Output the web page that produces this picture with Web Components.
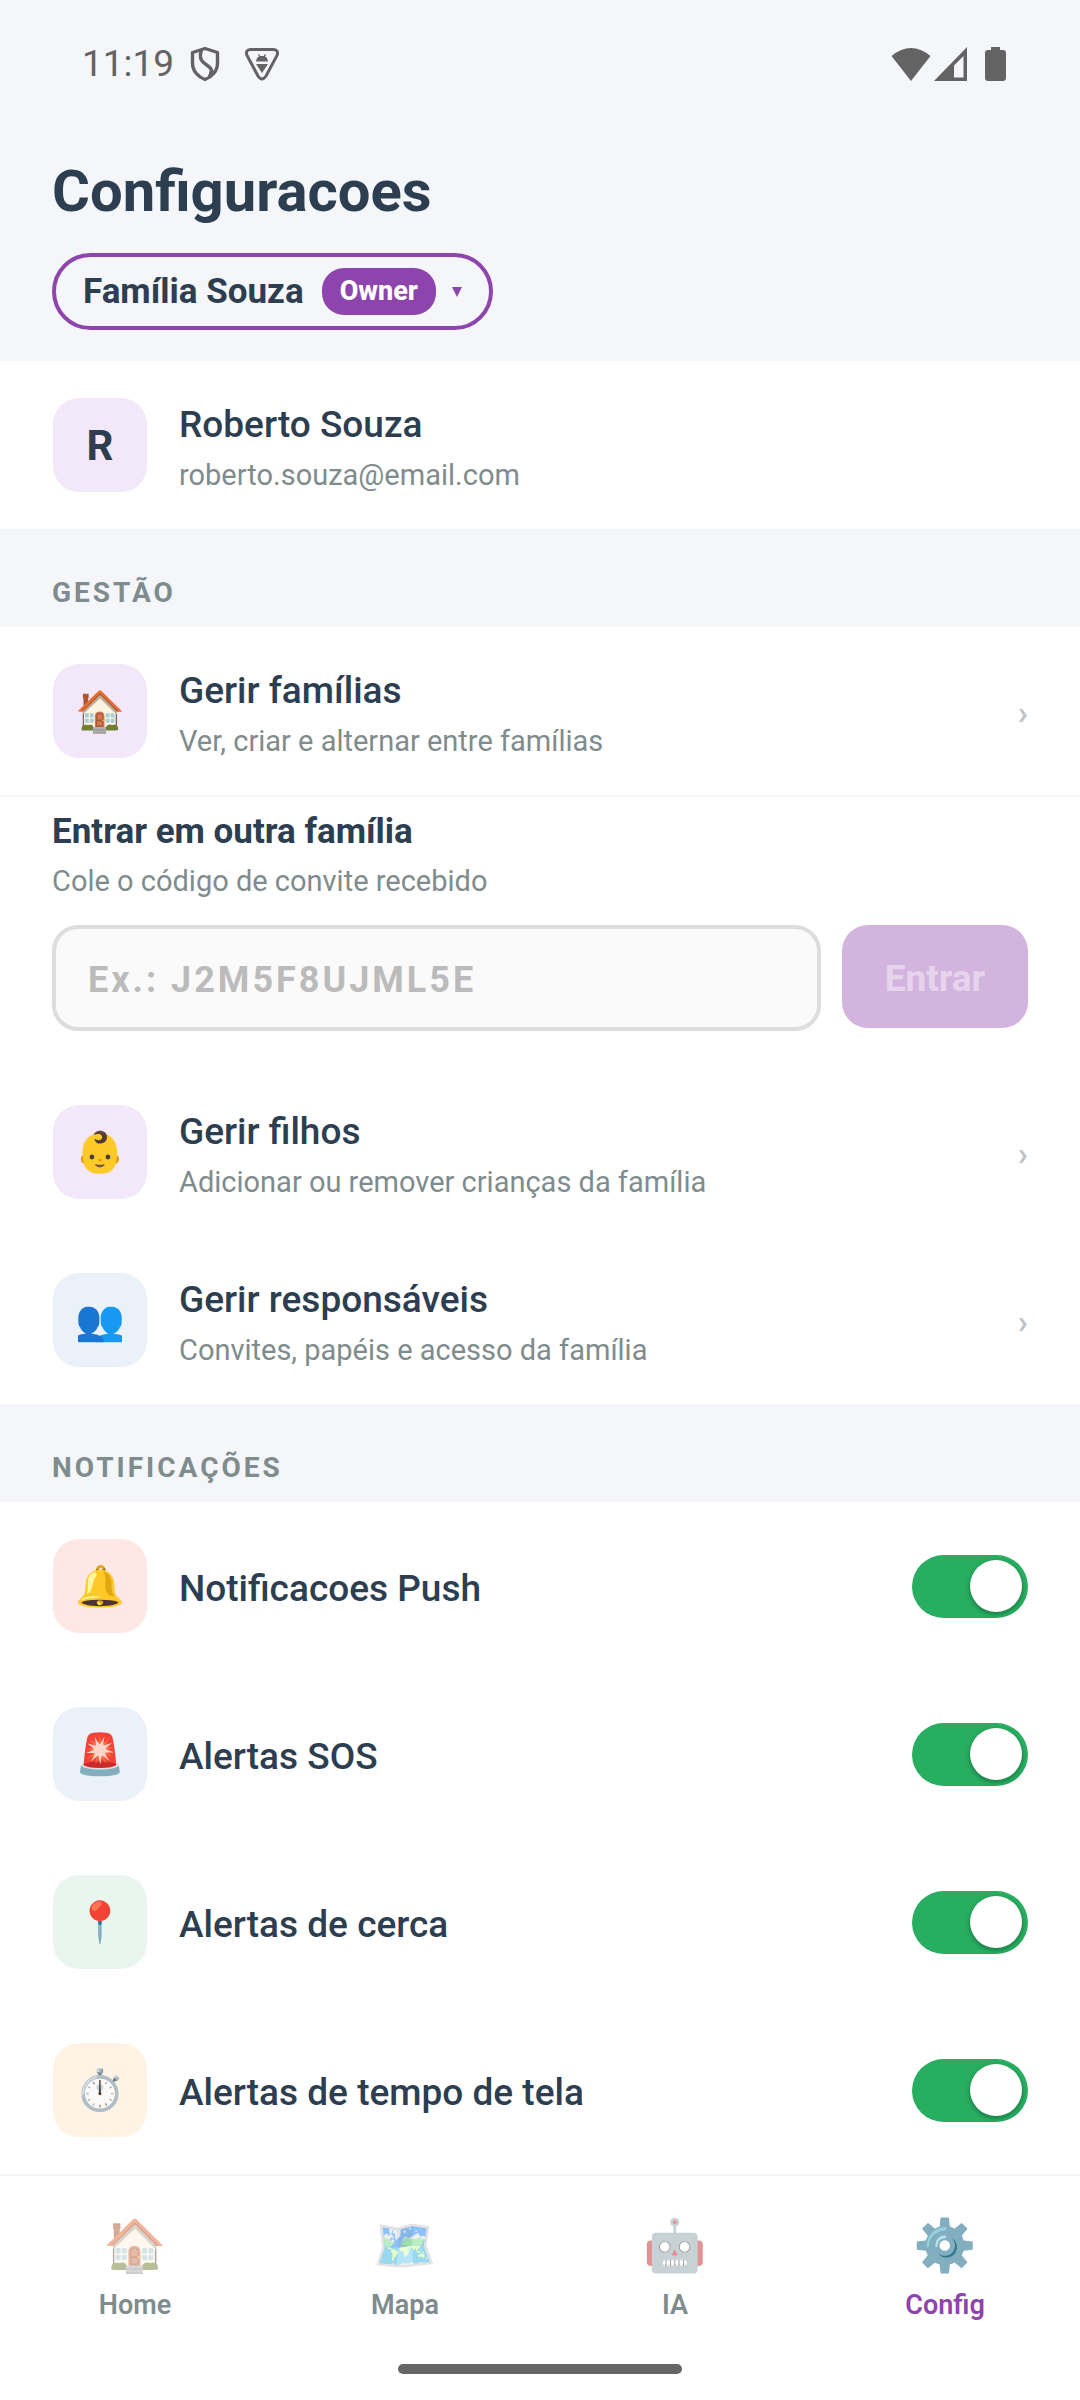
<!DOCTYPE html>
<html lang="pt-BR">
<head>
<meta charset="utf-8">
<meta name="viewport" content="width=device-width, initial-scale=1">
<title>Configuracoes</title>
<style>
    :root {
        --ink: #2c3e50;
        --muted: #7f8c8d;
        --accent: #8e44ad;
        --page: #f4f6fa;
        --side: 52px;
    }
    body {
        margin: 0;
        min-height: 100vh;
        display: flex;
        flex-direction: column;
        background: var(--page);
        color: var(--ink);
        font-family: Roboto, "Noto Color Emoji", sans-serif;
    }
    main {
        display: flex;
        flex-direction: column;
    }
</style>
</head>
<body>
    <status-bar time="11:19"></status-bar>
    <main>
        <page-header>
            Configuracoes
            <family-picker slot="picker" role-name="Owner">Família Souza</family-picker>
        </page-header>
        <settings-row tint="#f3e8f9">
            <b slot="icon">R</b>
            Roberto Souza
            <span slot="detail">roberto.souza@email.com</span>
        </settings-row>

        <section-title>GESTÃO</section-title>
        <settings-row tint="#f3e8f9" href="#familias" divided>
            <span slot="icon">🏠</span>
            Gerir famílias
            <span slot="detail">Ver, criar e alternar entre famílias</span>
        </settings-row>
        <join-family></join-family>
        <settings-row tint="#f3e8f9" href="#filhos">
            <span slot="icon">👶</span>
            Gerir filhos
            <span slot="detail">Adicionar ou remover crianças da família</span>
        </settings-row>
        <settings-row tint="#eaf1f8" href="#responsaveis">
            <span slot="icon">👥</span>
            Gerir responsáveis
            <span slot="detail">Convites, papéis e acesso da família</span>
        </settings-row>

        <section-title>NOTIFICAÇÕES</section-title>
        <settings-row tint="#fde8e6" toggle>
            <span slot="icon">🔔</span>
            Notificacoes Push
        </settings-row>
        <settings-row tint="#eaf1f8" toggle>
            <span slot="icon">🚨</span>
            Alertas SOS
        </settings-row>
        <settings-row tint="#e8f6ef" toggle>
            <span slot="icon">📍</span>
            Alertas de cerca
        </settings-row>
        <settings-row tint="#fef3e5" toggle>
            <span slot="icon">⏱️</span>
            Alertas de tempo de tela
        </settings-row>
    </main>
    <tab-bar>
        <tab-item href="#home" icon="🏠">Home</tab-item>
        <tab-item href="#mapa" icon="🗺️">Mapa</tab-item>
        <tab-item href="#ia" icon="🤖">IA</tab-item>
        <tab-item href="#config" icon="⚙️" active>Config</tab-item>
    </tab-bar>

<script>
class StatusBar extends HTMLElement {
    constructor() {
        super();
        this.attachShadow({ mode: 'open' });
        this.shadowRoot.innerHTML = `
            <style>
                :host {
                    display: flex;
                    align-items: center;
                    justify-content: space-between;
                    height: 128px;
                    padding: 0 74px 0 82px;
                    color: #636363;
                }
                div {
                    display: flex;
                    align-items: center;
                }
                .time {
                    font-size: 37px;
                    line-height: 44px;
                    margin-right: 15px;
                }
                svg {
                    display: block;
                }
                .shield {
                    margin-right: 23px;
                }
                .wifi {
                    margin-right: 3px;
                }
                .signal {
                    margin-right: 18px;
                }
            </style>
            <div>
                <span class="time">${this.getAttribute('time')}</span>
                <svg class="shield" width="32" height="36" viewBox="0 0 32 36" fill="none" stroke="currentColor" stroke-width="3.4" stroke-linejoin="round">
                    <path d="M16 2.500 L28.500 6.500 V17 C28.500 25 23 31 16 33.500 C9 31 3.500 25 3.500 17 V6.500 Z"/>
                    <path d="M12.500 4 C9.500 13 13 15.500 17 18.500 C23 22.500 24 24.500 20.500 30.500"/>
                    <path d="M22 23 L24.500 25 L19 32 Z" fill="currentColor" stroke-width="1"/>
                </svg>
                <svg width="36" height="36" viewBox="0 0 36 36" fill="currentColor">
                    <path d="M6.500 3.500 H29.500 Q35 4 33 9.500 L22 30 Q18 36 14 30 L3 9.500 Q1 4 6.500 3.500 Z" fill="none" stroke="currentColor" stroke-width="3"/>
                    <path d="M12 15.500 Q12.500 11.500 15 10.500 L14 8.500 L15 8 L16.200 10 H19.800 L21 8 L22 8.500 L21 10.500 Q23.500 11.500 24 15.500 Z"/>
                    <path d="M12 18 H24 L18 27 Z"/>
                </svg>
            </div>
            <div>
                <svg class="wifi" width="40" height="34" viewBox="0 0 40 34" fill="currentColor">
                    <path d="M20 34 L0.500 9 Q20 -7 39.500 9 Z"/>
                </svg>
                <svg class="signal" width="33" height="34" viewBox="0 0 33 34" fill="currentColor" fill-rule="evenodd">
                    <path d="M33 0 V34 H0 Z M29.500 9 L20 18.500 V30.500 H29.500 Z"/>
                </svg>
                <svg width="21" height="34" viewBox="0 0 21 34" fill="currentColor">
                    <path d="M6 0 H15 V3 H18 Q21 3 21 6 V31 Q21 34 18 34 H3 Q0 34 0 31 V6 Q0 3 3 3 H6 Z"/>
                </svg>
            </div>
        `;
    }
}

class PageHeader extends HTMLElement {
    constructor() {
        super();
        this.attachShadow({ mode: 'open' });
        this.shadowRoot.innerHTML = `
            <style>
                :host {
                    display: flex;
                    flex-direction: column;
                    align-items: flex-start;
                    gap: 26px;
                    padding: 27px var(--side) 31px;
                }
                h1 {
                    margin: 0;
                    font-size: 58px;
                    line-height: 72px;
                    font-weight: 700;
                }
            </style>
            <h1><slot></slot></h1>
            <slot name="picker"></slot>
        `;
    }
}

class FamilyPicker extends HTMLElement {
    constructor() {
        super();
        this.attachShadow({ mode: 'open' });
        this.shadowRoot.innerHTML = `
            <style>
                :host {
                    display: block;
                }
                button {
                    display: flex;
                    align-items: center;
                    height: 77px;
                    padding: 0 27px;
                    border: 4px solid var(--accent);
                    border-radius: 40px;
                    background: transparent;
                    color: inherit;
                    font: 700 35px/40px Roboto, sans-serif;
                    cursor: pointer;
                }
                .role {
                    margin: 0 16px 0 18px;
                    padding: 0 18px;
                    border-radius: 22px;
                    background: var(--accent);
                    color: white;
                    font-size: 27px;
                    line-height: 47px;
                    font-weight: 800;
                }
                svg {
                    display: block;
                    fill: var(--accent);
                }
            </style>
            <button type="button" aria-haspopup="listbox">
                <slot></slot>
                <span class="role">${this.getAttribute('role-name')}</span>
                <svg width="10" height="10" viewBox="0 0 10 10"><path d="M0 0 H10 L5 10 Z"/></svg>
            </button>
        `;
    }
}

class SectionTitle extends HTMLElement {
    constructor() {
        super();
        this.attachShadow({ mode: 'open' });
        this.shadowRoot.innerHTML = `
            <style>
                :host {
                    display: block;
                    padding: 46px var(--side) 16px;
                }
                h2 {
                    margin: 0;
                    color: var(--muted);
                    font-size: 28px;
                    line-height: 36px;
                    font-weight: 700;
                    letter-spacing: 3px;
                }
            </style>
            <h2><slot></slot></h2>
        `;
    }
}

class ToggleSwitch extends HTMLElement {
    constructor() {
        super();
        this.attachShadow({ mode: 'open' });
        this.shadowRoot.innerHTML = `
            <style>
                :host {
                    display: block;
                }
                input {
                    appearance: none;
                    display: flex;
                    align-items: center;
                    width: 116px;
                    height: 63px;
                    margin: 0;
                    padding: 0 6px;
                    box-sizing: border-box;
                    border-radius: 32px;
                    background: #c8cdd2;
                    cursor: pointer;
                }
                input::before {
                    content: "";
                    width: 52px;
                    height: 52px;
                    border-radius: 50%;
                    background: white;
                    box-shadow: 0 2px 5px rgba(0, 0, 0, 0.35);
                }
                input:checked {
                    justify-content: flex-end;
                    background: #27ae60;
                }
            </style>
            <input type="checkbox" role="switch" checked>
        `;
        this.shadowRoot.querySelector('input').setAttribute('aria-label', this.getAttribute('label'));
    }
}

class SettingsRow extends HTMLElement {
    constructor() {
        super();
        this.attachShadow({ mode: 'open' });
        const href = this.getAttribute('href');
        const title = [...this.childNodes]
            .filter((node) => node.nodeType === Node.TEXT_NODE)
            .map((node) => node.textContent.trim())
            .join('');
        let end = '';
        if (href) {
            end = '<span class="chevron" aria-hidden="true">›</span>';
        }
        if (this.hasAttribute('toggle')) {
            end = `<toggle-switch label="${title}"></toggle-switch>`;
        }
        const tag = href ? 'a' : 'div';
        this.shadowRoot.innerHTML = `
            <style>
                :host {
                    display: block;
                    background: white;
                }
                :host([divided]) {
                    border-bottom: 2px solid #f4f6fa;
                }
                .row {
                    display: flex;
                    align-items: center;
                    gap: 32px;
                    padding: 37px 52px 37px 53px;
                    color: inherit;
                    text-decoration: none;
                }
                .icon {
                    display: flex;
                    align-items: center;
                    justify-content: center;
                    flex: none;
                    width: 94px;
                    height: 94px;
                    padding-top: 2px;
                    box-sizing: border-box;
                    border-radius: 26px;
                    background: ${this.getAttribute('tint')};
                    font-size: 40px;
                    line-height: 50px;
                }
                ::slotted(b) {
                    font-size: 42px;
                }
                .text {
                    display: flex;
                    flex-direction: column;
                    gap: 13px;
                    flex: 1;
                    min-width: 0;
                    padding-top: 6px;
                }
                .title {
                    font-size: 37px;
                    line-height: 40px;
                    font-weight: 500;
                }
                ::slotted([slot="detail"]) {
                    color: var(--muted);
                    font-size: 29px;
                    line-height: 34px;
                }
                .chevron {
                    padding-top: 2px;
                    color: #bdc3c7;
                    font-size: 34px;
                    line-height: 40px;
                    font-weight: 600;
                }
            </style>
            <${tag} class="row" ${href ? `href="${href}"` : ''}>
                <span class="icon"><slot name="icon"></slot></span>
                <span class="text">
                    <span class="title"><slot></slot></span>
                    <slot name="detail"></slot>
                </span>
                ${end}
            </${tag}>
        `;
    }
}

class JoinFamily extends HTMLElement {
    constructor() {
        super();
        this.attachShadow({ mode: 'open' });
        this.shadowRoot.innerHTML = `
            <style>
                :host {
                    display: block;
                    padding: 12px var(--side) 37px;
                    background: white;
                }
                label {
                    display: block;
                    font-size: 35px;
                    line-height: 46px;
                    font-weight: 700;
                }
                p {
                    margin: 6px 0 24px;
                    color: var(--muted);
                    font-size: 29px;
                    line-height: 40px;
                }
                form {
                    display: flex;
                    align-items: flex-start;
                    gap: 21px;
                }
                input {
                    flex: 1;
                    min-width: 0;
                    height: 106px;
                    padding: 4px 32px 0;
                    box-sizing: border-box;
                    border: 4px solid #dddddd;
                    border-radius: 26px;
                    background: #fafafa;
                    color: inherit;
                    font: 700 36px/46px Roboto, sans-serif;
                    letter-spacing: 3px;
                }
                input::placeholder {
                    color: #bbbbbb;
                }
                button {
                    height: 103px;
                    padding: 4px 43px 0;
                    border: none;
                    border-radius: 26px;
                    background: #d2b4de;
                    color: #e6d4ed;
                    font: 700 37px/46px Roboto, sans-serif;
                }
            </style>
            <label for="code">Entrar em outra família</label>
            <p id="hint">Cole o código de convite recebido</p>
            <form>
                <input id="code" name="code" type="text" placeholder="Ex.: J2M5F8UJML5E" aria-describedby="hint" autocomplete="off">
                <button type="submit" disabled>Entrar</button>
            </form>
        `;
    }

    connectedCallback() {
        this.shadowRoot.querySelector('form').addEventListener('submit', (event) => {
            event.preventDefault();
        });
    }
}

class TabBar extends HTMLElement {
    constructor() {
        super();
        this.attachShadow({ mode: 'open' });
        this.shadowRoot.innerHTML = `
            <style>
                :host {
                    display: block;
                    margin-top: auto;
                    padding-bottom: 26px;
                    border-top: 2px solid #f4f4f4;
                    background: white;
                }
                nav {
                    display: flex;
                    padding: 36px 0 42px;
                }
                .handle {
                    width: 284px;
                    height: 10px;
                    margin: 0 auto;
                    border-radius: 5px;
                    background: #666666;
                }
            </style>
            <nav><slot></slot></nav>
            <div class="handle"></div>
        `;
    }
}

class TabItem extends HTMLElement {
    constructor() {
        super();
        this.attachShadow({ mode: 'open' });
        this.shadowRoot.innerHTML = `
            <style>
                :host {
                    display: block;
                    flex: 1;
                }
                a {
                    display: flex;
                    flex-direction: column;
                    align-items: center;
                    gap: 8px;
                    color: var(--muted);
                    font-size: 27px;
                    line-height: 34px;
                    font-weight: 600;
                    text-decoration: none;
                }
                .icon {
                    font-size: 51px;
                    line-height: 68px;
                    color: black;
                    opacity: 0.5;
                }
                :host([active]) a {
                    color: var(--accent);
                }
                :host([active]) .icon {
                    opacity: 1;
                }
            </style>
            <a href="${this.getAttribute('href')}">
                <span class="icon" aria-hidden="true">${this.getAttribute('icon')}</span>
                <slot></slot>
            </a>
        `;
    }
}

customElements.define('status-bar', StatusBar);
customElements.define('page-header', PageHeader);
customElements.define('family-picker', FamilyPicker);
customElements.define('section-title', SectionTitle);
customElements.define('toggle-switch', ToggleSwitch);
customElements.define('settings-row', SettingsRow);
customElements.define('join-family', JoinFamily);
customElements.define('tab-bar', TabBar);
customElements.define('tab-item', TabItem);
</script>
</body>
</html>
